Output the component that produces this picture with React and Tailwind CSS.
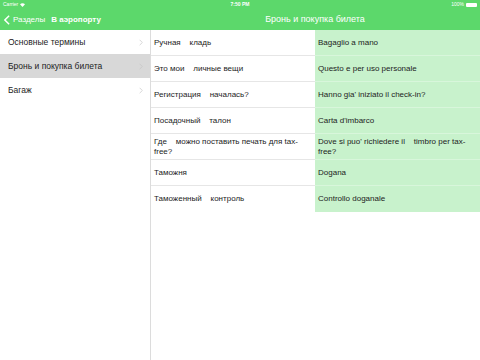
const sections = [
  { title: 'Основные термины', active: false },
  { title: 'Бронь и покупка билета', active: true },
  { title: 'Багаж', active: false },
];

const phrases = [
  ['Ручная    кладь', 'Bagaglio a mano'],
  ['Это мои    личные вещи', 'Questo e per uso personale'],
  ['Регистрация    началась?', "Hanno gia' iniziato il check-in?"],
  ['Посадочный    талон', "Carta d'imbarco"],
  ['Где    можно поставить печать для tax-\nfree?', "Dove si puo' richiedere il    timbro per tax-\nfree?"],
  ['Таможня', 'Dogana'],
  ['Таможенный    контроль', 'Controllo doganale'],
];

const Chevron = ({ className }) => (
  <svg viewBox="0 0 6 10" className={className} fill="none">
    <path d="M1 1l4 4-4 4" stroke="currentColor" strokeWidth="1" />
  </svg>
);

const App = () => {
  return (
    <div
      className="w-[480px] h-[360px] bg-white overflow-hidden flex flex-col text-[#1c1c1c]"
      style={{ fontFamily: '"Liberation Sans", Arial, sans-serif' }}
    >
      {/* status + nav bar */}
      <div className="bg-[#5cd86b] text-white h-[30px] flex flex-col shrink-0">
        <div className="h-[10px] relative flex items-center px-[3px] text-[5px]">
          <div className="flex items-center gap-[2px]">
            <span>Carrier</span>
            <svg viewBox="0 0 10 8" className="w-[5px] h-[4px]" fill="white">
              <path d="M5 8L0 2.5C3 -0.5 7 -0.5 10 2.5z" />
            </svg>
          </div>
          <span className="absolute left-1/2 -translate-x-1/2 font-bold">7:50 PM</span>
          <div className="ml-auto flex items-center gap-[2px]">
            <span>100%</span>
            <div className="w-[11px] h-[4px] bg-white rounded-[1px]" />
          </div>
        </div>
        <div className="h-[20px] flex">
          <div className="w-[150px] flex items-center pl-[4px] text-[8px]">
            <svg viewBox="0 0 8 14" className="w-[6px] h-[10px] mr-[3px]" fill="none">
              <path d="M7 1L1 7l6 6" stroke="white" strokeWidth="2" />
            </svg>
            <span>Разделы</span>
            <span className="ml-[6px] font-bold">В аэропорту</span>
          </div>
          <div className="flex-1 flex items-center justify-center text-[9px]">
            Бронь и покупка билета
          </div>
        </div>
      </div>

      <div className="flex flex-1">
        {/* left list */}
        <div className="w-[151px] border-r border-[#dcdcdc] shrink-0">
          {sections.map((s) => (
            <div
              key={s.title}
              className={`h-[24px] flex items-center pl-[8px] pr-[7px] text-[8.5px] ${s.active ? 'bg-[#d8d8d8]' : ''}`}
            >
              <span className="flex-1">{s.title}</span>
              <Chevron className="w-[4px] h-[7px] text-[#c4c4c4]" />
            </div>
          ))}
        </div>

        {/* phrase table */}
        <div className="flex-1 flex flex-col">
          {phrases.map(([ru, it], i) => (
            <div key={i} className="h-[26px] flex text-[8px] leading-[10px]">
              <div
                className={`w-[164px] flex items-center pl-[3px] pr-[4px] whitespace-pre-wrap ${i < phrases.length - 1 ? 'border-b border-[#e6e6e6]' : ''}`}
              >
                {ru}
              </div>
              <div
                className={`flex-1 bg-[#c8f2cc] flex items-center pl-[3px] pr-[4px] whitespace-pre-wrap ${i < phrases.length - 1 ? 'border-b border-[#d8f6db]' : ''}`}
              >
                {it}
              </div>
            </div>
          ))}
        </div>
      </div>
    </div>
  );
};

export default App;
